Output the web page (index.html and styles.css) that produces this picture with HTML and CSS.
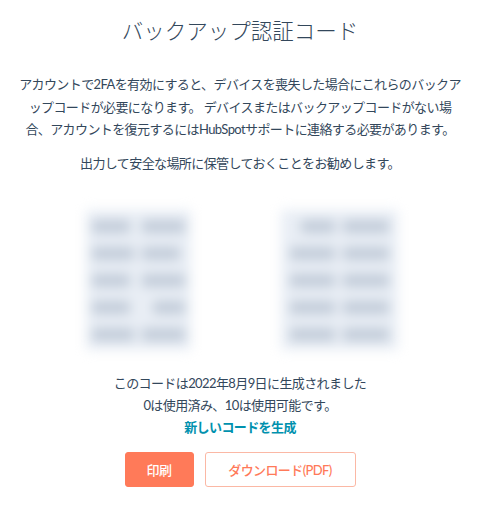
FILE: index.html
```html
<!DOCTYPE html>
<html lang="ja">
  <head>
    <meta charset="UTF-8" />
    <title>バックアップ認証コード</title>
    <link rel="stylesheet" href="styles.css">
  </head>
  <body>
    <div class="modal">
      <h1 class="title">バックアップ認証コード</h1>
      <p class="intro">アカウントで2FAを有効にすると、デバイスを喪失した場合にこれらのバックアップコードが必要になります。 デバイスまたはバックアップコードがない場合、アカウントを復元するにはHubSpotサポートに連絡する必要があります。</p>
      <p class="hint">出力して安全な場所に保管しておくことをお勧めします。</p>

      <div class="codes">
        <div class="code-list">
          <span class="code w1"></span><span class="code w2"></span>
          <span class="code w2"></span><span class="code w1"></span>
          <span class="code w1"></span><span class="code w2"></span>
          <span class="code w1"></span><span class="code w3"></span>
          <span class="code w2"></span><span class="code w2"></span>
        </div>
        <div class="code-list wide">
          <span class="code w3"></span><span class="code w2"></span>
          <span class="code w2"></span><span class="code w2"></span>
          <span class="code w2"></span><span class="code w2"></span>
          <span class="code w2"></span><span class="code w2"></span>
          <span class="code w2"></span><span class="code w2"></span>
        </div>
      </div>

      <p class="meta">このコードは2022年8月9日に生成されました<br>0は使用済み、10は使用可能です。</p>
      <a href="#" class="regen">新しいコードを生成</a>

      <div class="actions">
        <button class="btn btn-primary">印刷</button>
        <button class="btn btn-secondary">ダウンロード(PDF)</button>
      </div>
    </div>
  </body>
</html>
```

FILE: styles.css
```css
* {
  margin: 0;
  padding: 0;
  box-sizing: border-box;
}

:root {
  --text: #33475b;
  --link: #0091ae;
  --orange: #ff7a59;
  --code-bg: #e9eef5;
}

body {
  font-family: Lato, 'Noto Sans CJK JP', sans-serif;
  background: #fff;
  color: var(--text);
  font-size: 13px;
  letter-spacing: -0.6px;
}

.modal {
  width: 480px;
  padding-top: 15px;
  display: flex;
  flex-direction: column;
  align-items: center;
  text-align: center;
}

.title {
  font-size: 21.5px;
  font-weight: 300;
  line-height: 33px;
  letter-spacing: 0;
}

.intro {
  width: 446px;
  margin-top: 25px;
  line-height: 22.5px;
}

.hint {
  margin-top: 11px;
  line-height: 22px;
}

/* blurred backup codes */
.codes {
  display: flex;
  align-items: center;
  gap: 90px;
  height: 150px;
  margin-top: 31px;
  padding-left: 3px;
}

.code-list {
  width: 105px;
  height: 140px;
  background: var(--code-bg);
  padding: 10px 6px;
  display: grid;
  grid-template-columns: 1fr 1fr;
  column-gap: 8px;
  row-gap: 14px;
  filter: blur(6px);
}

.code-list.wide {
  width: 117px;
  padding: 10px 9px;
}

.code {
  display: block;
  height: 13px;
  background: #c2ccd9;
  border-radius: 2px;
}

.code.w1 { width: 90%; }
.code.w2 { width: 100%; }
.code.w3 { width: 75%; justify-self: end; }

.meta {
  margin-top: 17px;
  line-height: 22px;
}

.regen {
  color: var(--link);
  font-weight: 700;
  text-decoration: none;
  line-height: 22px;
}

.actions {
  display: flex;
  gap: 11px;
  margin-top: 14px;
}

.btn {
  font-family: inherit;
  font-size: 13px;
  font-weight: 500;
  letter-spacing: inherit;
  height: 35px;
  border-radius: 3px;
  cursor: pointer;
}

.btn-primary {
  width: 69px;
  background: var(--orange);
  border: 1px solid var(--orange);
  color: #fff;
}

.btn-secondary {
  width: 151px;
  background: #fff;
  border: 1px solid #fbb8a5;
  color: var(--orange);
}
```
